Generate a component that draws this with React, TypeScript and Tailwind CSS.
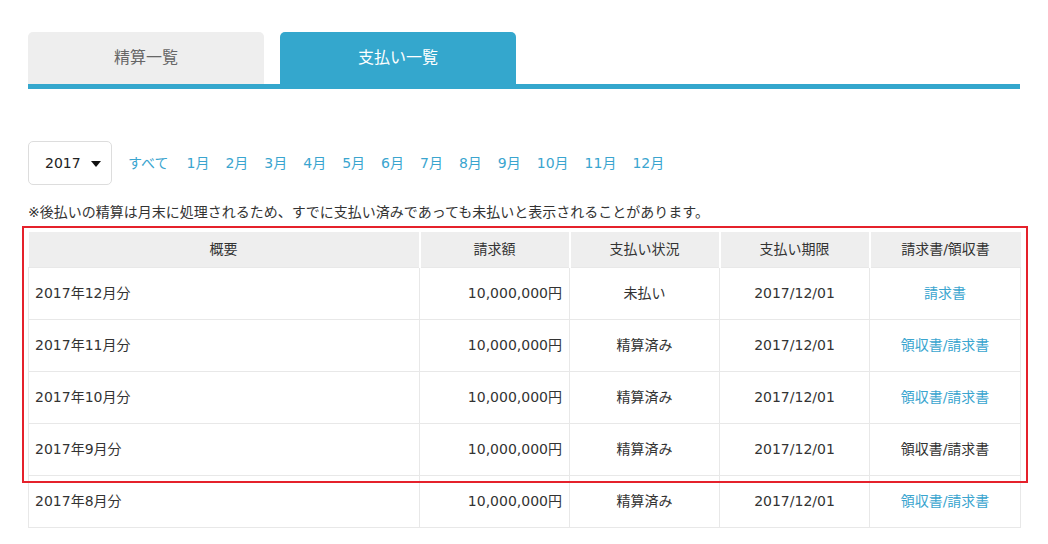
import React from "react";

const months = ["すべて", "1月", "2月", "3月", "4月", "5月", "6月", "7月", "8月", "9月", "10月", "11月", "12月"];

type Row = {
  label: string;
  amount: string;
  status: string;
  due: string;
  docs: "invoice" | "both" | "plain";
};

const rows: Row[] = [
  { label: "2017年12月分", amount: "10,000,000円", status: "未払い", due: "2017/12/01", docs: "invoice" },
  { label: "2017年11月分", amount: "10,000,000円", status: "精算済み", due: "2017/12/01", docs: "both" },
  { label: "2017年10月分", amount: "10,000,000円", status: "精算済み", due: "2017/12/01", docs: "both" },
  { label: "2017年9月分", amount: "10,000,000円", status: "精算済み", due: "2017/12/01", docs: "plain" },
  { label: "2017年8月分", amount: "10,000,000円", status: "精算済み", due: "2017/12/01", docs: "both" },
];

function Docs({ kind }: { kind: Row["docs"] }) {
  if (kind === "invoice") return <a className="text-[#3aa5cf]">請求書</a>;
  if (kind === "plain") return <span className="text-[#333]">領収書/請求書</span>;
  return (
    <span className="text-[#3aa5cf]">
      <a>領収書</a>/<a>請求書</a>
    </span>
  );
}

export default function App() {
  return (
    <div
      className="relative min-h-screen w-[1048px] bg-white px-[28px] pt-[32px] text-[14px] text-[#333]"
      style={{ fontFamily: '"DejaVu Sans", "Noto Sans CJK JP", sans-serif' }}
    >
      {/* Tabs */}
      <div className="flex w-[992px] gap-4 border-b-[5px] border-[#34a7cd]">
        <button className="flex h-[52px] w-[236px] items-center justify-center rounded-t-[5px] bg-[#eeeeee] text-[16px] text-[#666]">
          精算一覧
        </button>
        <button className="flex h-[52px] w-[236px] items-center justify-center rounded-t-[5px] bg-[#34a7cd] text-[16px] text-white">
          支払い一覧
        </button>
      </div>

      {/* Filter */}
      <div className="mt-[52px] flex items-center">
        <div className="flex h-[44px] w-[84px] items-center justify-between rounded-[5px] border border-[#dddddd] pl-[16px] pr-[10px]">
          <span className="text-[14px] leading-none text-[#222]">2017</span>
          <svg width="10" height="6" viewBox="0 0 10 6" className="mt-px">
            <path d="M0 0h10L5 6z" fill="#111" />
          </svg>
        </div>
        <div className="ml-[16px] flex items-center gap-[16px] text-[#3aa5cf]">
          {months.map((m, i) => (
            <a key={m} className={i === 0 ? "mr-[2px] leading-[20px]" : "leading-[20px]"}>
              {m}
            </a>
          ))}
        </div>
      </div>

      <p className="mt-[17px] leading-[20px]">
        ※後払いの精算は月末に処理されるため、すでに支払い済みであっても未払いと表示されることがあります。
      </p>

      {/* Table */}
      <table className="mt-[10px] w-[992px] table-fixed border-collapse">
        <colgroup>
          <col className="w-[391px]" />
          <col className="w-[150px]" />
          <col className="w-[150px]" />
          <col className="w-[150px]" />
          <col className="w-[151px]" />
        </colgroup>
        <thead>
          <tr className="h-[35px] bg-[#eeeeee]">
            {["概要", "請求額", "支払い状況", "支払い期限", "請求書/領収書"].map((h) => (
              <th key={h} className="border-x-2 border-white px-[6px] text-center font-normal first:border-l-0 last:border-r-0">
                {h}
              </th>
            ))}
          </tr>
        </thead>
        <tbody>
          {rows.map((r) => (
            <tr key={r.label} className="h-[52px]">
              <td className="border border-[#e8e8e8] px-[6px] text-left">{r.label}</td>
              <td className="border border-[#e8e8e8] pl-[6px] pr-[7px] text-right">{r.amount}</td>
              <td className="border border-[#e8e8e8] px-[6px] text-center">{r.status}</td>
              <td className="border border-[#e8e8e8] px-[6px] text-center">{r.due}</td>
              <td className="border border-[#e8e8e8] px-[6px] text-center">
                <Docs kind={r.docs} />
              </td>
            </tr>
          ))}
        </tbody>
      </table>

      {/* Annotation overlay */}
      <div className="pointer-events-none absolute left-[22px] top-[226px] h-[257px] w-[1006px] border-2 border-[#e5212b]" />
    </div>
  );
}
